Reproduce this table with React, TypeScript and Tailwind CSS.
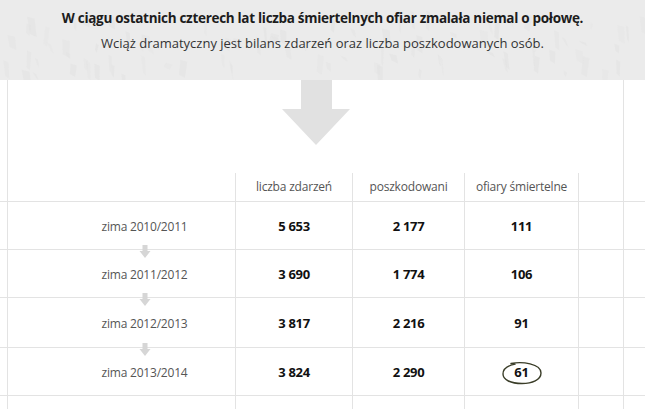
import React from "react";

const LINE = "border-[#e3e3e3]";

function Texture() {
  const shapes: React.ReactNode[] = [];
  let s = 11;
  const rnd = () => {
    s = (s * 9301 + 49297) % 233280;
    return s / 233280;
  };
  for (let i = 0; i < 90; i++) {
    const x = rnd() * 645;
    const y = 10 + rnd() * 65;
    const h = 5 + rnd() * 16;
    const w = 2 + rnd() * 6;
    const sk = (rnd() - 0.5) * 6;
    shapes.push(
      <path
        key={i}
        d={`M${x} ${y} L${x + w} ${y + 2} L${x + w + sk} ${y + h} L${x + sk + 1} ${y + h - 3} Z`}
        fill="#e1e1e1"
        opacity={0.25 + rnd() * 0.3}
      />
    );
  }
  return (
    <svg className="absolute inset-0" width="645" height="80" viewBox="0 0 645 80">
      {shapes}
    </svg>
  );
}

function SmallArrow() {
  return (
    <svg
      className="absolute left-[131px] top-[-5px]"
      width="12"
      height="14"
      viewBox="0 0 12 14"
    >
      <path d="M3.5 0 H8.5 V6 H11.5 L6 13 L0.5 6 H3.5 Z" fill="#d6d6d6" />
    </svg>
  );
}

function Circle() {
  return (
    <svg
      className="absolute left-1/2 top-1/2 -translate-x-1/2 -translate-y-1/2 mt-[1px]"
      width="42"
      height="25"
      viewBox="0 0 42 25"
    >
      <path
        d="M10 3 C21 0.8, 40 3, 40 12.5 C40 19.5, 31 23, 21 23 C10 23, 2 19.5, 2 13.5 C2 8.5, 6.5 5.2, 14 3.6"
        fill="none"
        stroke="#3a3d28"
        strokeWidth="1.4"
        strokeLinecap="round"
      />
    </svg>
  );
}

type Row = {
  label: string;
  a: string;
  b: string;
  c: string;
  h: string;
  arrow: boolean;
  circle?: boolean;
};

const rows: Row[] = [
  { label: "zima 2010/2011", a: "5 653", b: "2 177", c: "111", h: "h-[48px]", arrow: false },
  { label: "zima 2011/2012", a: "3 690", b: "1 774", c: "106", h: "h-[48px]", arrow: true },
  { label: "zima 2012/2013", a: "3 817", b: "2 216", c: "91", h: "h-[50px]", arrow: true },
  { label: "zima 2013/2014", a: "3 824", b: "2 290", c: "61", h: "h-[48px]", arrow: true, circle: true },
];

export default function App() {
  return (
    <div
      className="w-[645px] h-[409px] overflow-hidden bg-white text-[#222]"
      style={{ fontFamily: '"Open Sans", "Liberation Sans", sans-serif' }}
    >
      {/* header band */}
      <div className="relative h-[80px] bg-[#ebebeb] pt-[8px] text-center">
        <Texture />
        <div className="relative text-[13.5px] leading-[20px] font-bold text-[#1c1c1c] tracking-[-0.3px]">
          W ciągu ostatnich czterech lat liczba śmiertelnych ofiar zmalała niemal o połowę.
        </div>
        <div className="relative mt-[5px] text-[13px] leading-[20px] text-[#333]">
          Wciąż dramatyczny jest bilans zdarzeń oraz liczba poszkodowanych osób.
        </div>
      </div>

      {/* big arrow area */}
      <div className="flex h-[93px]">
        <div className="w-[7px]" />
        <div className={`w-[617px] border-l border-r ${LINE}`}>
          <svg className="ml-[274px]" width="68" height="66" viewBox="0 0 68 66">
            <path d="M19 0 H50 V29 H68 L34 65 L0 29 H19 Z" fill="#e1e1e1" />
          </svg>
        </div>
      </div>

      {/* table header */}
      <div className={`flex h-[29px] border-b ${LINE} text-[12px] text-[#555] tracking-[-0.2px]`}>
        <div className="w-[7px]" />
        <div className={`w-[228px] border-l ${LINE}`} />
        <div className={`w-[117px] border-l ${LINE} flex items-center justify-center`}>liczba zdarzeń</div>
        <div className={`w-[112px] border-l ${LINE} flex items-center justify-center`}>poszkodowani</div>
        <div className={`w-[114px] border-l ${LINE} flex items-center justify-center`}>ofiary śmiertelne</div>
        <div className={`w-[45px] border-l ${LINE}`} />
        <div className={`flex-1 border-l ${LINE}`} />
      </div>

      {rows.map((r) => (
        <div key={r.label} className={`flex ${r.h} border-b ${LINE}`}>
          <div className="w-[7px]" />
          <div
            className={`relative w-[228px] border-l ${LINE} flex items-center justify-center pl-[46px] pt-[2px] text-[12px] text-[#555] tracking-[-0.2px]`}
          >
            {r.arrow && <SmallArrow />}
            {r.label}
          </div>
          <div className={`w-[117px] border-l ${LINE} flex items-center justify-center pt-[2px] text-[13px] font-bold text-[#111] tracking-[-0.3px]`}>
            {r.a}
          </div>
          <div className={`w-[112px] border-l ${LINE} flex items-center justify-center pt-[2px] text-[13px] font-bold text-[#111] tracking-[-0.3px]`}>
            {r.b}
          </div>
          <div className={`relative w-[114px] border-l ${LINE} flex items-center justify-center pt-[2px] text-[13px] font-bold text-[#111] tracking-[-0.3px]`}>
            {r.circle && <Circle />}
            <span className="relative">{r.c}</span>
          </div>
          <div className={`w-[45px] border-l ${LINE}`} />
          <div className={`flex-1 border-l ${LINE}`} />
        </div>
      ))}

      <div className="flex h-[20px]">
        <div className="w-[7px]" />
        <div className={`w-[228px] border-l ${LINE}`} />
        <div className={`w-[117px] border-l ${LINE}`} />
        <div className={`w-[112px] border-l ${LINE}`} />
        <div className={`w-[114px] border-l ${LINE}`} />
        <div className={`w-[45px] border-l ${LINE}`} />
        <div className={`flex-1 border-l ${LINE}`} />
      </div>
    </div>
  );
}
